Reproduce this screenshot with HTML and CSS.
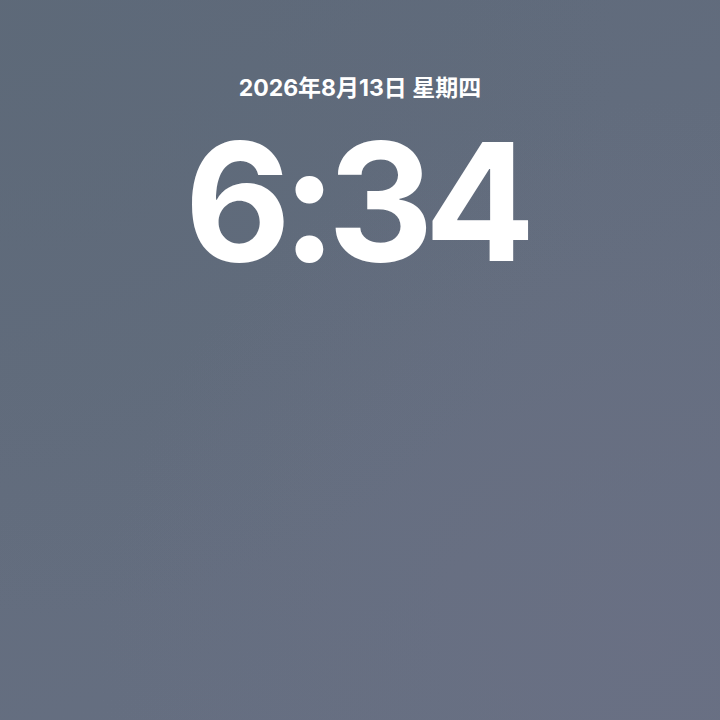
FILE: index.html
```html
<!DOCTYPE html>
<html lang="zh">
<head>
<meta charset="utf-8">
<link rel="stylesheet" href="styles.css">
</head>
<body>
<main class="lock">
  <div class="date">2026年8月13日 星期四</div>
  <div class="time">6:34</div>
</main>
</body>
</html>
```
FILE: styles.css
```css
html, body {
  margin: 0;
  padding: 0;
  width: 720px;
  height: 720px;
  overflow: hidden;
}
body {
  background:
    radial-gradient(ellipse at 90% 90%, rgba(106,112,132,0.8) 0%, rgba(106,112,132,0) 60%),
    radial-gradient(ellipse at 5% 5%, rgba(93,105,120,0.8) 0%, rgba(93,105,120,0) 60%),
    linear-gradient(160deg, #5f6a7b 0%, #636d7e 50%, #666f82 100%);
  font-family: "Inter", "Noto Sans CJK SC", sans-serif;
  color: #ffffff;
}
.lock {
  display: flex;
  flex-direction: column;
  align-items: center;
  padding-top: 74px;
}
.date {
  font-size: 23px;
  font-weight: 700;
  line-height: 28px;
}
.time {
  font-size: 164px;
  font-weight: 700;
  line-height: 1;
  margin-top: 18px;
  letter-spacing: -9px;
  padding-right: 9px;
}
```
